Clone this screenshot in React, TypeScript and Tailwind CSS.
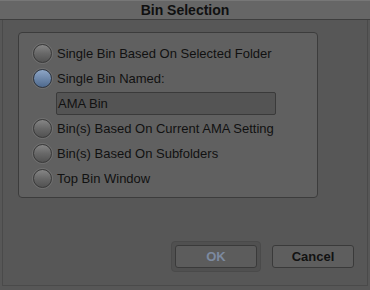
import React from "react";

const options = [
  "Single Bin Based On Selected Folder",
  "Single Bin Named:",
  "Bin(s) Based On Current AMA Setting",
  "Bin(s) Based On Subfolders",
  "Top Bin Window",
];

function Radio({ checked }: { checked?: boolean }) {
  return (
    <div className="w-[21px] h-[21px] rounded-full border border-[#727272] flex items-center justify-center shrink-0">
      <div
        className={
          checked
            ? "w-[19px] h-[19px] rounded-full border border-[#2e3540] bg-gradient-to-b from-[#8ea6c6] to-[#4f6a8e]"
            : "w-[19px] h-[19px] rounded-full border border-[#3a3a3a] bg-gradient-to-b from-[#868686] via-[#686868] to-[#525252]"
        }
      />
    </div>
  );
}

export default function App() {
  return (
    <div
      className="w-[370px] h-[290px] bg-[#575757] flex flex-col overflow-hidden"
      style={{ fontFamily: '"Liberation Sans", Arial, sans-serif' }}
    >
      <div className="h-[20px] bg-[#666666] border-t border-[#777] border-b border-b-[#3e3e3e] flex items-center justify-center">
        <span className="text-[14px] font-bold text-[#101010]">Bin Selection</span>
      </div>
      <div className="flex-1 flex flex-col border-x border-b border-[#4a4a4a] mx-[2px] mb-[4px] pt-[12px]">
        <div className="ml-[15px] w-[300px] h-[166px] bg-[#606060] border border-[#3c3c3c] rounded-[4px] pl-[13px] pt-[8px] flex flex-col">
          {options.map((label, i) => (
            <React.Fragment key={label}>
              <div className="h-[25px] flex items-center gap-[4px]">
                <Radio checked={i === 1} />
                <span className="text-[13px] text-[#111111]">{label}</span>
              </div>
              {i === 1 && (
                <div className="ml-[24px] w-[220px] h-[23px] mt-[1px] mb-[1px] bg-[#545454] border border-[#3a3a3a] rounded-[2px] flex items-center px-[1px]">
                  <span className="text-[13px] text-[#111111]">AMA Bin</span>
                </div>
              )}
            </React.Fragment>
          ))}
        </div>
        <div className="flex-1" />
        <div className="flex justify-end gap-[11px] pr-[13px] pb-[13px]">
          <div className="p-[3px] rounded-[4px] border border-[#4a4a4a] bg-[#505050]">
            <div className="w-[82px] h-[23px] bg-[#5c5c5c] border border-[#3a3a3a] rounded-[3px] flex items-center justify-center">
              <span className="text-[13px] font-bold text-[#7c8aa0]">OK</span>
            </div>
          </div>
          <div className="pt-[4px]">
            <div className="w-[82px] h-[23px] bg-[#5e5e5e] border border-[#3a3a3a] rounded-[3px] flex items-center justify-center">
              <span className="text-[13px] font-bold text-[#121212]">Cancel</span>
            </div>
          </div>
        </div>
      </div>
    </div>
  );
}
